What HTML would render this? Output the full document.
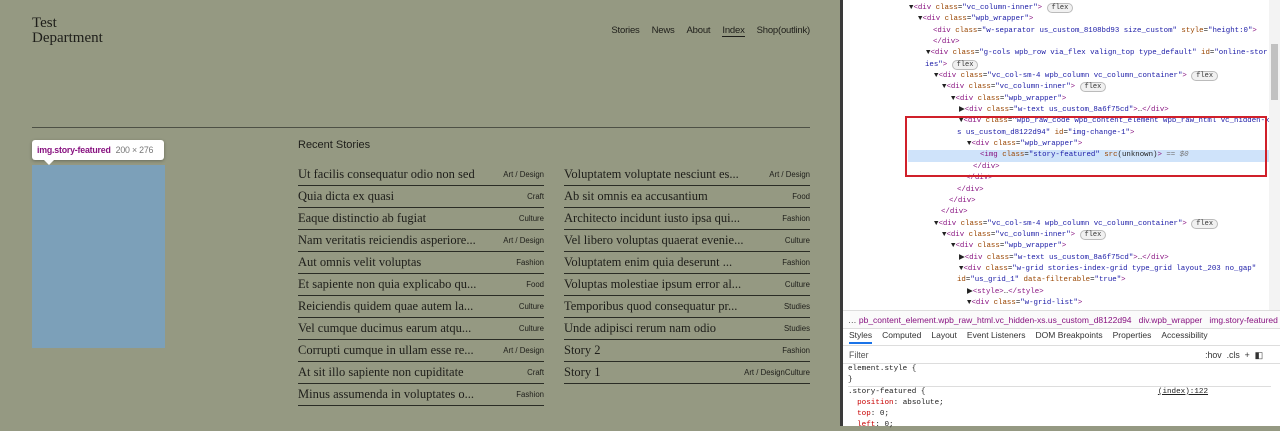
<!DOCTYPE html>
<html><head><meta charset="utf-8"><style>
*{margin:0;padding:0;box-sizing:border-box}
body{width:1280px;height:426px;overflow:hidden;position:relative;background:#959982;font-family:"Liberation Sans",sans-serif}
.logo{position:absolute;left:32px;top:16px;font:15px/15px "Liberation Serif",serif;color:#1e1e1a}
.nav{position:absolute;top:25px;right:470px;font:9.5px "Liberation Sans",sans-serif;color:#1e1e1a;display:flex;gap:12px;letter-spacing:-0.2px}
.nav span.u{border-bottom:1px solid #1e1e1a}
.hr{position:absolute;left:32px;top:127px;width:778px;height:1px;background:#4d5045}
.tip{position:absolute;left:32px;top:140px;width:132px;height:20px;background:#fff;border-radius:3px;box-shadow:0 1px 3px rgba(0,0,0,.3);font:8.8px/20px "Liberation Sans",sans-serif;padding-left:5px;white-space:nowrap;letter-spacing:-0.2px}
.tip b{color:#881280;font-weight:bold}.tip i{font-style:normal;color:#777;margin-left:5px}
.tip:after{content:"";position:absolute;left:12px;bottom:-5px;border:5px solid transparent;border-top-color:#fff;border-bottom:0}
.img{position:absolute;left:32px;top:165px;width:133px;height:183px;background:#7ca0b9}
.rs{position:absolute;left:298px;top:139px;font:11px "Liberation Sans",sans-serif;color:#1e1e1a}
.col{position:absolute;top:164px;width:246px}
.row{height:22px;border-bottom:1.5px solid #2a2c25;display:flex;justify-content:space-between;align-items:center}
.row span{font:12.5px "Liberation Serif",serif;color:#1e1e1a;white-space:nowrap}
.row em{font:7.8px "Liberation Sans",sans-serif;font-style:normal;color:#1e1e1a}
.dev{position:absolute;left:840px;top:0;width:440px;height:426px;background:#fff;border-left:3px solid #3a3a3a}
.code{position:absolute;left:0;top:0;width:427px;height:310px;font:7.4px "Liberation Mono",monospace;color:#222;overflow:hidden;padding-top:3px}
.code div{height:11.35px;line-height:11.35px;white-space:pre;position:relative}
.t{color:#881280}.a{color:#994500}.v{color:#1a1aa6}
.fl{display:inline-block;border:1px solid #bbb;border-radius:6px;background:#f1f1f1;font-size:7px;line-height:8px;padding:0 4px;color:#333}
.sel{background:#cfe3fa;margin-left:65px}
.box{position:absolute;left:62px;top:116px;width:362px;height:61px;border:2px solid #d0202a}
.sb{position:absolute;right:0;top:0;width:11px;height:310px;background:#f3f3f3}
.sb i{position:absolute;left:2px;top:44px;width:7px;height:56px;background:#c1c1c1}
.crumb{position:absolute;left:0;top:310px;width:440px;height:19px;border-top:1px solid #ddd;border-bottom:1px solid #ddd;font:8.5px/18px "Liberation Sans",sans-serif;color:#333;padding-left:5px;white-space:nowrap;overflow:hidden;background:#fafafa}
.tabs{position:absolute;left:0;top:330px;width:440px;height:14px;font:8.5px "Liberation Sans",sans-serif;color:#333;display:flex;gap:10px;padding-left:6px;white-space:nowrap}
.tabs span:first-child{border-bottom:2px solid #1a73e8;padding-bottom:1px}
.filt{position:absolute;left:0;top:345px;width:440px;height:19px;border-top:1px solid #ddd;border-bottom:1px solid #ddd;font:8.8px/18px "Liberation Sans",sans-serif;color:#555;padding-left:6px}
.filt b{position:absolute;right:20px;font-weight:normal;color:#333}
.css{position:absolute;left:0;top:364px;width:428px;font:7.6px/11px "Liberation Mono",monospace;color:#222;padding-left:5px;white-space:pre}
</style></head><body>
<div class="logo">Test<br>Department</div>
<div class="nav"><span>Stories</span><span>News</span><span>About</span><span class="u">Index</span><span>Shop(outlink)</span></div>
<div class="hr"></div>
<div class="tip"><b>img.story-featured</b><i>200 × 276</i></div>
<div class="img"></div>
<div class="rs">Recent Stories</div>
<div class="col" style="left:298px">
<div class="row"><span>Ut facilis consequatur odio non sed</span><em>Art / Design</em></div>
<div class="row"><span>Quia dicta ex quasi</span><em>Craft</em></div>
<div class="row"><span>Eaque distinctio ab fugiat</span><em>Culture</em></div>
<div class="row"><span>Nam veritatis reiciendis asperiore...</span><em>Art / Design</em></div>
<div class="row"><span>Aut omnis velit voluptas</span><em>Fashion</em></div>
<div class="row"><span>Et sapiente non quia explicabo qu...</span><em>Food</em></div>
<div class="row"><span>Reiciendis quidem quae autem la...</span><em>Culture</em></div>
<div class="row"><span>Vel cumque ducimus earum atqu...</span><em>Culture</em></div>
<div class="row"><span>Corrupti cumque in ullam esse re...</span><em>Art / Design</em></div>
<div class="row"><span>At sit illo sapiente non cupiditate</span><em>Craft</em></div>
<div class="row"><span>Minus assumenda in voluptates o...</span><em>Fashion</em></div>
</div>
<div class="col" style="left:564px">
<div class="row"><span>Voluptatem voluptate nesciunt es...</span><em>Art / Design</em></div>
<div class="row"><span>Ab sit omnis ea accusantium</span><em>Food</em></div>
<div class="row"><span>Architecto incidunt iusto ipsa qui...</span><em>Fashion</em></div>
<div class="row"><span>Vel libero voluptas quaerat evenie...</span><em>Culture</em></div>
<div class="row"><span>Voluptatem enim quia deserunt ...</span><em>Fashion</em></div>
<div class="row"><span>Voluptas molestiae ipsum error al...</span><em>Culture</em></div>
<div class="row"><span>Temporibus quod consequatur pr...</span><em>Studies</em></div>
<div class="row"><span>Unde adipisci rerum nam odio</span><em>Studies</em></div>
<div class="row"><span>Story 2</span><em>Fashion</em></div>
<div class="row"><span>Story 1</span><em>Art / DesignCulture</em></div>
</div>
<div class="dev">
<div class="code">
<div style="padding-left:66px">▼<span class="t">&lt;div</span> <span class="a">class</span>=<span class="v">"vc_column-inner"</span><span class="t">&gt;</span> <span class="fl">flex</span></div>
<div style="padding-left:75px">▼<span class="t">&lt;div</span> <span class="a">class</span>=<span class="v">"wpb_wrapper"</span><span class="t">&gt;</span></div>
<div style="padding-left:90px"><span class="t">&lt;div</span> <span class="a">class</span>=<span class="v">"w-separator us_custom_8108bd93 size_custom"</span> <span class="a">style</span>=<span class="v">"height:0"</span><span class="t">&gt;</span></div>
<div style="padding-left:90px"><span class="t">&lt;/div&gt;</span></div>
<div style="padding-left:83px">▼<span class="t">&lt;div</span> <span class="a">class</span>=<span class="v">"g-cols wpb_row via_flex valign_top type_default"</span> <span class="a">id</span>=<span class="v">"online-stor</span></div>
<div style="padding-left:82px"><span class="v">ies"</span><span class="t">&gt;</span> <span class="fl">flex</span></div>
<div style="padding-left:91px">▼<span class="t">&lt;div</span> <span class="a">class</span>=<span class="v">"vc_col-sm-4 wpb_column vc_column_container"</span><span class="t">&gt;</span> <span class="fl">flex</span></div>
<div style="padding-left:99px">▼<span class="t">&lt;div</span> <span class="a">class</span>=<span class="v">"vc_column-inner"</span><span class="t">&gt;</span> <span class="fl">flex</span></div>
<div style="padding-left:108px">▼<span class="t">&lt;div</span> <span class="a">class</span>=<span class="v">"wpb_wrapper"</span><span class="t">&gt;</span></div>
<div style="padding-left:116px">▶<span class="t">&lt;div</span> <span class="a">class</span>=<span class="v">"w-text us_custom_8a6f75cd"</span><span class="t">&gt;</span>…<span class="t">&lt;/div&gt;</span></div>
<div style="padding-left:116px">▼<span class="t">&lt;div</span> <span class="a">class</span>=<span class="v">"wpb_raw_code wpb_content_element wpb_raw_html vc_hidden-x</span></div>
<div style="padding-left:114px"><span class="v">s us_custom_d8122d94"</span> <span class="a">id</span>=<span class="v">"img-change-1"</span><span class="t">&gt;</span></div>
<div style="padding-left:124px">▼<span class="t">&lt;div</span> <span class="a">class</span>=<span class="v">"wpb_wrapper"</span><span class="t">&gt;</span></div>
<div class="sel" style="padding-left:72px"><span class="t">&lt;img</span> <span class="a">class</span>=<span class="v">"story-featured"</span> <span class="a">src</span>(unknown)<span class="t">&gt;</span> <i style="color:#777">== $0</i></div>
<div style="padding-left:130px"><span class="t">&lt;/div&gt;</span></div>
<div style="padding-left:123px"><span class="t">&lt;/div&gt;</span></div>
<div style="padding-left:114px"><span class="t">&lt;/div&gt;</span></div>
<div style="padding-left:106px"><span class="t">&lt;/div&gt;</span></div>
<div style="padding-left:98px"><span class="t">&lt;/div&gt;</span></div>
<div style="padding-left:91px">▼<span class="t">&lt;div</span> <span class="a">class</span>=<span class="v">"vc_col-sm-4 wpb_column vc_column_container"</span><span class="t">&gt;</span> <span class="fl">flex</span></div>
<div style="padding-left:99px">▼<span class="t">&lt;div</span> <span class="a">class</span>=<span class="v">"vc_column-inner"</span><span class="t">&gt;</span> <span class="fl">flex</span></div>
<div style="padding-left:108px">▼<span class="t">&lt;div</span> <span class="a">class</span>=<span class="v">"wpb_wrapper"</span><span class="t">&gt;</span></div>
<div style="padding-left:116px">▶<span class="t">&lt;div</span> <span class="a">class</span>=<span class="v">"w-text us_custom_8a6f75cd"</span><span class="t">&gt;</span>…<span class="t">&lt;/div&gt;</span></div>
<div style="padding-left:116px">▼<span class="t">&lt;div</span> <span class="a">class</span>=<span class="v">"w-grid stories-index-grid type_grid layout_203 no_gap"</span></div>
<div style="padding-left:114px"><span class="a">id</span>=<span class="v">"us_grid_1"</span> <span class="a">data-filterable</span>=<span class="v">"true"</span><span class="t">&gt;</span></div>
<div style="padding-left:124px">▶<span class="t">&lt;style&gt;</span>…<span class="t">&lt;/style&gt;</span></div>
<div style="padding-left:124px">▼<span class="t">&lt;div</span> <span class="a">class</span>=<span class="v">"w-grid-list"</span><span class="t">&gt;</span></div>
</div>
<div class="box"></div>
<div class="sb"><i></i></div>
<div class="crumb">… <span style="color:#881280">pb_content_element.wpb_raw_html.vc_hidden-xs.us_custom_d8122d94</span> &nbsp; <span style="color:#881280">div.wpb_wrapper</span> &nbsp; <span style="color:#881280">img.story-featured</span> &nbsp; …</div>
<div class="tabs"><span>Styles</span><span>Computed</span><span>Layout</span><span>Event Listeners</span><span>DOM Breakpoints</span><span>Properties</span><span>Accessibility</span></div>
<div class="filt">Filter<b>:hov &nbsp;.cls &nbsp;+ &nbsp;◧</b></div>
<div class="css">element.style {
}
<span style="display:block;border-top:1px solid #ddd;height:0"></span>.story-featured {                                                   <u>(index):122</u>
  <span style="color:#c80000">position</span>: absolute;
  <span style="color:#c80000">top</span>: 0;
  <span style="color:#c80000">left</span>: 0;</div>
</div>
</body></html>
